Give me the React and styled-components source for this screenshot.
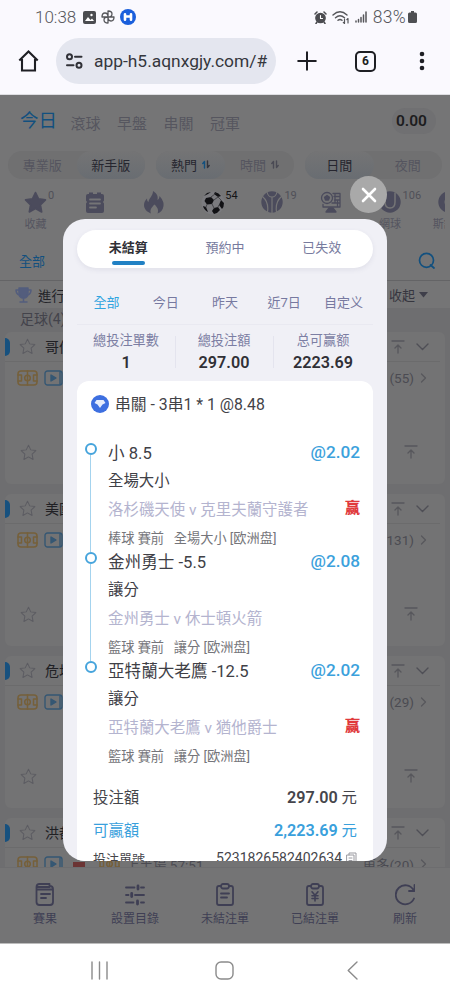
import React from "react";
import styled, { createGlobalStyle } from "styled-components";

const GlobalStyle = createGlobalStyle`
  *, *::before, *::after { box-sizing: border-box; }
  body {
    margin: 0;
    font-family: Roboto, "Noto Sans CJK TC", sans-serif;
    background: #fff;
  }
  svg { display: block; flex: none; }
`;

const Phone = styled.div`
  width: 450px;
  height: 1000px;
  overflow: hidden;
  display: flex;
  flex-direction: column;
  background: #fff;
`;

/* ---------- status + browser bar ---------- */

const StatusBar = styled.div`
  height: 34px;
  padding: 0 33px 0 35px;
  display: flex;
  align-items: center;
  background: #faf9fe;
  color: #55565a;
  font-size: 17px;
  font-weight: 300;
  line-height: 34px;
`;

const Battery = styled.span`
  font-size: 17.5px;
  letter-spacing: 0.3px;
`;

const StatusIcons = styled.div`
  display: flex;
  align-items: center;
  gap: ${(p) => p.$gap || 4}px;
  margin-left: ${(p) => p.$left || "0"};
  margin-right: ${(p) => p.$right || 0}px;
`;

const BrowserBar = styled.div`
  height: 61px;
  padding-left: 18px;
  display: flex;
  align-items: center;
  padding-bottom: 6px;
  background: #faf9fe;
  border-bottom: 1px solid #dedee2;
`;

const UrlBox = styled.div`
  width: 220px;
  height: 46px;
  margin: 0 21px 0 17px;
  padding-left: 9px;
  border-radius: 23px;
  background: #e4e6ef;
  display: flex;
  align-items: center;
  gap: 10px;
  font-size: 17.4px;
  color: #35373d;
  white-space: nowrap;
`;

const TabCount = styled.div`
  width: 21px;
  height: 21px;
  margin: 0 43px 0 38px;
  border: 2px solid #1e1f24;
  border-radius: 5px;
  font-size: 12px;
  font-weight: 700;
  line-height: 17px;
  text-align: center;
  color: #1e1f24;
`;

/* ---------- page behind the dialog ---------- */

const Page = styled.div`
  position: relative;
  height: 848px;
  flex: none;
  overflow: hidden;
  display: flex;
  flex-direction: column;
  background: #757576;
  color: #4b4b5d;
`;

const MainTabs = styled.div`
  height: 54px;
  padding: 0 14px 4px 20px;
  display: flex;
  align-items: center;
  gap: 16.5px;
`;

const MainTab = styled.span`
  font-size: ${(p) => (p.$active ? 18.5 : 15)}px;
  color: ${(p) => (p.$active ? "#12507f" : "#56565f")};
  padding-top: ${(p) => (p.$active ? 0 : 5)}px;
  margin-top: ${(p) => (p.$active ? -3 : -1)}px;
  margin-right: ${(p) => (p.$active ? -3 : 0)}px;
`;

const Balance = styled.div`
  margin-left: auto;
  margin-top: 1px;
  width: 44px;
  height: 26px;
  border-radius: 13px;
  background: #707072;
  line-height: 26px;
  padding-left: 4px;
  font-size: 15.5px;
  font-weight: 600;
  color: #1d1d20;
`;

const SwitchRow = styled.div`
  display: flex;
  height: 30px;
  padding: 2px 8px 0;
  justify-content: space-between;
`;

const Switch = styled.div`
  display: flex;
  width: ${(p) => p.$width}px;
  height: 28px;
  border-radius: 14px;
  background: #707071;
`;

const SwitchItem = styled.div`
  flex: 1;
  display: flex;
  align-items: center;
  justify-content: center;
  gap: 5px;
  padding-bottom: 1px;
  border-radius: 14px;
  font-size: 13px;
  color: ${(p) => (p.$active ? "#26262f" : "#55555f")};
  background: ${(p) =>
    p.$active ? "linear-gradient(#747475, #696d72)" : "transparent"};
`;

const Sports = styled.div`
  width: 445px;
  height: 62px;
  padding: 12px 0 0 6px;
  display: flex;
  overflow: hidden;
`;

const Sport = styled.div`
  position: relative;
  flex: 0 0 59.1px;
  display: flex;
  flex-direction: column;
  align-items: center;
  font-size: 11px;
  line-height: 14px;
  white-space: nowrap;
  color: #54545f;
`;

const SportLabel = styled.span`
  margin-top: auto;
  margin-bottom: 9px;
`;

const Count = styled.sup`
  position: absolute;
  left: 42px;
  top: -2px;
  font-size: 11px;
  line-height: 14px;
  color: ${(p) => (p.$dark ? "#141416" : "#505058")};
`;

const LeagueBar = styled.div`
  height: 40px;
  padding: 0 15px 0 19px;
  display: flex;
  align-items: center;
  justify-content: space-between;
  font-size: 13px;
  color: #12507f;
  border-bottom: 1px solid #646466;
`;

const LiveBar = styled.div`
  height: 27px;
  padding: 0 22px 0 15px;
  display: flex;
  align-items: center;
  font-size: 13.5px;
  color: #242429;
  background: #757576;
`;

const LiveName = styled.span`
  margin-left: 6px;
`;

const Collapse = styled.span`
  margin-left: auto;
  display: flex;
  align-items: center;
  gap: 4px;
  font-size: 13px;
  color: #36363f;
`;

const SportTitle = styled.div`
  height: 24px;
  padding-left: 20px;
  font-size: 14px;
  line-height: 22px;
  color: #43434b;
  background: #6e6e70;
`;

const Matches = styled.div`
  height: 535px;
  flex: none;
  overflow: hidden;
  padding: 0 5px;
  display: flex;
  flex-direction: column;
  gap: 10px;
  background: #6e6e70;
`;

const Match = styled.div`
  height: 152px;
  flex: none;
  border-radius: 6px;
  background: #737374;
`;

const MatchHead = styled.div`
  height: 30px;
  margin-right: 5px;
  padding-right: 11px;
  display: flex;
  align-items: center;
  border-bottom: 1px solid #6b6b6c;
  font-size: 14px;
  color: #202024;
`;

const Marker = styled.div`
  width: 5px;
  height: 18px;
  margin-right: 9px;
  border-radius: 0 5px 5px 0;
  background: #17517f;
`;

const HeadName = styled.span`
  margin: -2px 0 0 9px;
`;

const Spacer = styled.div`
  flex: 1;
`;

const MatchRow = styled.div`
  height: 32px;
  padding: 0 18px 0 12px;
  display: flex;
  align-items: center;
  gap: 6px;
  font-size: 13.5px;
  color: #4b4b52;
`;

const Flag = styled.div`
  width: 12px;
  height: 8px;
  margin: 4px 8px 0 4px;
  background: #6b3434;
`;

const MatchFoot = styled.div`
  height: 86px;
  padding: 30px 27px 0 15px;
  display: flex;
  align-items: center;
  justify-content: space-between;
`;

const BottomTabs = styled.div`
  height: 76px;
  flex: none;
  display: flex;
  background: #747475;
  border-top: 1px solid #6d6d6f;
`;

const BottomTab = styled.div`
  flex: 1;
  padding-top: 15px;
  display: flex;
  flex-direction: column;
  align-items: center;
  gap: 3px;
  font-size: 12px;
  line-height: 18px;
  color: #3f3f54;
`;

/* ---------- dialog ---------- */

const Dialog = styled.div`
  position: absolute;
  left: 63px;
  top: 124px;
  width: 324px;
  height: 642px;
  padding: 11px 14px 0;
  overflow: hidden;
  border-radius: 22px;
  background: #f0f0f6;
`;

const CloseButton = styled.div`
  position: absolute;
  left: 350px;
  top: 81px;
  width: 37px;
  height: 37px;
  border-radius: 50%;
  background: #a9a9a9;
  display: flex;
  align-items: center;
  justify-content: center;
`;

const StatusTabs = styled.div`
  height: 38px;
  padding: 0 3px;
  display: grid;
  grid-template-columns: repeat(3, 1fr);
  border-radius: 19px;
  background: #fff;
  box-shadow: 0 2px 5px rgba(90, 90, 130, 0.1);
`;

const StatusTab = styled.div`
  display: flex;
  flex-direction: column;
  align-items: center;
  font-size: 13px;
  line-height: 35px;
  font-weight: ${(p) => (p.$active ? 700 : 400)};
  color: ${(p) => (p.$active ? "#303036" : "#777b9e")};
  &::after {
    content: "";
    width: 33px;
    height: 4px;
    margin-top: -4px;
    border-radius: 2px;
    background: ${(p) => (p.$active ? "#2181c4" : "transparent")};
  }
`;

const Filters = styled.div`
  height: 57px;
  padding-top: 25px;
  display: grid;
  grid-template-columns: repeat(5, 1fr);
  border-bottom: 1px solid #e9e9f1;
  margin-bottom: 3.5px;
`;

const Filter = styled.span`
  text-align: center;
  font-size: 13px;
  line-height: 20px;
  color: ${(p) => (p.$active ? "#31a5e0" : "#7779a0")};
`;

const Stats = styled.div`
  height: 52.5px;
  display: grid;
  grid-template-columns: 98px 98px 100px;
`;

const Stat = styled.div`
  position: relative;
  text-align: center;
  font-size: 13.2px;
  line-height: 23px;
  color: #7c7ea3;
  & + &::before {
    content: "";
    position: absolute;
    left: 0;
    top: 7px;
    height: 32px;
    border-left: 1px solid #e4e4ee;
  }
`;

const StatValue = styled.div`
  font-size: 16.2px;
  font-weight: 600;
  line-height: 22px;
  color: #303036;
`;

const Ticket = styled.div`
  height: 520px;
  padding: 10px 13px 0 14px;
  border-radius: 12px 12px 0 0;
  background: #fff;
`;

const TicketTitle = styled.div`
  height: 26px;
  display: flex;
  align-items: center;
  gap: 6px;
  font-size: 15.8px;
  color: #424247;
  white-space: pre;
`;

const TitleText = styled.span`
  margin-top: -1px;
`;

const Legs = styled.div`
  padding-top: 21px;
`;

const Leg = styled.div`
  position: relative;
  height: 109px;
  padding-left: 17px;
  &::before {
    content: "";
    position: absolute;
    left: -6px;
    top: 5px;
    width: 12px;
    height: 12px;
    border: 2px solid #46a4dc;
    border-radius: 50%;
    background: #fff;
  }
  &:not(:last-child)::after {
    content: "";
    position: absolute;
    left: -1px;
    top: 17px;
    height: 97px;
    border-left: 1.5px solid #a4d3ee;
  }
`;

const LegLine = styled.div`
  display: flex;
  justify-content: space-between;
  align-items: center;
  height: ${(p) => p.$height || 28}px;
  white-space: pre;
  font-size: ${(p) => p.$size || 15.4}px;
  color: ${(p) => p.$color || "#404046"};
`;

const Odds = styled.span`
  font-size: 17.2px;
  font-weight: 500;
  color: #3ba1dc;
`;

const Won = styled.span`
  font-size: 15px;
  font-weight: 900;
  color: #e0393c;
  margin-top: -4px;
`;

const Totals = styled.div`
  margin-top: 14px;
  padding: 0 3px 0 2px;
`;

const TotalRow = styled.div`
  height: ${(p) => (p.$small ? 26 : 33)}px;
  display: flex;
  align-items: center;
  justify-content: space-between;
  font-size: ${(p) => (p.$small ? 13 : 15.4)}px;
  color: ${(p) => (p.$blue ? "#39a0dc" : "#45454b")};
  b { font-size: 16.2px; font-weight: 600; }
`;

const OrderNo = styled.span`
  display: flex;
  align-items: center;
  gap: 4px;
  font-size: 14px;
`;

const SystemNav = styled.div`
  height: 57px;
  padding: 0 92px 4px 91px;
  display: grid;
  grid-template-columns: 1fr 19px 1fr;
  align-items: center;
  background: #fff;
  border-top: 1px solid #bcbcbc;
  svg:last-child { justify-self: end; }
`;

/* ---------- icons ---------- */

const Svg = ({ w = 22, h, box, color = "currentColor", sw = 1.6, children }) => (
  <svg
    width={w}
    height={h || w}
    viewBox={box || `0 0 ${w} ${h || w}`}
    fill="none"
    stroke={color}
    strokeWidth={sw}
    strokeLinecap="round"
    strokeLinejoin="round"
  >
    {children}
  </svg>
);

const STAR = "M11 1.5 13.9 7.6 20.5 8.5 15.7 13.2 16.9 20 11 16.7 5.1 20 6.3 13.2 1.5 8.5 8.1 7.6Z";

const StarOutline = () => (
  <Svg w={17} box="0 0 22 22" color="#5c5c62" sw={1.3}><path d={STAR} /></Svg>
);

const ToTop = () => (
  <Svg w={14} h={16} color="#57575c" sw={1.3}><path d="M1 2h12M7 14V6M4 9l3-3 3 3" /></Svg>
);

const Lineup = () => (
  <Svg w={21} h={16} color="#76603a" sw={1.5}>
    <rect x="1" y="1" width="19" height="14" rx="3" />
    <path d="M10.500 1v14M1 5h3.500v6H1M20 5h-3.500v6H20" />
    <circle cx="10.500" cy="8" r="2.800" />
  </Svg>
);

const Video = () => (
  <Svg w={19} h={16} color="#355773" sw={1.4}>
    <rect x="1" y="1" width="17" height="14" rx="2.500" />
    <path d="M7 5v6l5-3z" fill="#355773" />
    <path d="M16 2v12" />
  </Svg>
);

const GREY = "#4b4b5c";

const sportIcons = {
  star: <Svg w={23} box="0 0 22 22" color={GREY}><path d={STAR} fill={GREY} /></Svg>,
  note: (
    <Svg w={22} color="none">
      <path d="M4 3h1V1.500h4V3h4V1.500h4V3h1q2 0 2 2v4.500l-1 1.500 1 1.500V20q0 2-2 2H4q-2 0-2-2v-7.500L3 11 2 9.500V5q0-2 2-2z" fill={GREY} />
      <path d="M6 8.500h10M6 12.500h10M6 16.500h6" stroke="#757576" strokeWidth="1.800" />
    </Svg>
  ),
  fire: (
    <Svg w={22} h={23} color="none">
      <path fill={GREY} d="M10 0c5 3 5 6 4.500 9 1.500-1 2-2.500 2-4C20 9 21 12 20.500 15c-.5 4-3 6.500-6 7.500 1.500-3.500 0-6-3-9-3 3-5 5.500-3.500 9C4 21 1 18 1 14c0-3 1.500-5 3-6.500 0 2 .5 3 1.500 3.500C6 7 10 5 10 0z" />
    </Svg>
  ),
  soccer: (
    <Svg w={24} color="none">
      <circle cx="12" cy="12" r="11.500" fill="#7b7b7f" />
      <path fill="#111114" d="m5 7 5-1 3 3-2 4-5 .5L3.500 10zM14 1q4 1 6 4l-3 1-4-3zM20 9l3 3q0 4-2 6l-3-4zM13 17l4-1 2 3q-2 3-6 4l-2-3zM2 15l3 1 2 5Q3 19 2 15zM6 2l4-1-3 2-4 2z" />
      <path stroke="#444448" strokeWidth="1" d="m10 6 4-3M13 9l4-3M11 13l2 4M6 13.500 5 16M17 6l3 3M17 16l1-2" />
    </Svg>
  ),
  basketball: (
    <Svg w={22} color="none">
      <circle cx="11" cy="11" r="10.700" fill={GREY} />
      <path stroke="#757576" strokeWidth="1.200" d="M11 6v16M1.500 5.500Q8 11 6.500 21M20.500 5.500Q14 11 15.500 21M6 1q1 5 5 5t5-5" />
    </Svg>
  ),
  esports: (
    <Svg w={22} color={GREY} sw={1.3}>
      <circle cx="7" cy="7" r="5.500" />
      <path d="M7 4.500 9.500 6.200 8.500 9H5.500L4.500 6.200z" fill={GREY} />
      <path d="M13 2.500h7V16H3v-2.500M14 5.500h5M14.500 9h5M12 12h7M15 3v9M17.500 9v6" />
      <path d="M9 17h4l3 4H6z" fill={GREY} />
    </Svg>
  ),
  tennis: (
    <Svg w={22} color="none">
      <circle cx="11" cy="11" r="10.700" fill={GREY} />
      <path stroke="#757576" strokeWidth="1.500" d="M6 2v9q0 6 5 6t5-6V2" />
    </Svg>
  ),
  snooker: (
    <Svg w={22} color="none">
      <circle cx="11" cy="11" r="10.700" fill={GREY} />
      <circle cx="12" cy="11" r="5.500" fill="#757576" />
    </Svg>
  ),
};

const sports = [
  { icon: "star", count: "0", label: "收藏" },
  { icon: "note" },
  { icon: "fire" },
  { icon: "soccer", count: "54", dark: true },
  { icon: "basketball", count: "19" },
  { icon: "esports" },
  { icon: "tennis", count: "106", label: "網球" },
  { icon: "snooker", label: "斯諾克" },
];

const matches = [
  { name: "哥倫", more: "(55)" },
  { name: "美國", more: "(131)" },
  { name: "危地", more: "(29)" },
  { name: "洪都", more: "更多(20)", clock: "上半場 57:51" },
];

const clipboard = (
  <>
    <path d="M6 3H4Q2 3 2 5v15q0 2 2 2h12q2 0 2-2V5q0-2-2-2h-2" />
    <rect x="6" y="1" width="8" height="4.500" rx="2" />
  </>
);

const bottomTabs = [
  {
    label: "賽果",
    icon: <><path d="M1.500 6V4q0-3 3-3h10v2q3.500 0 3.500 3v13q0 3-3 3H4.500q-3 0-3-3zM1.500 6.500H18M2.500 4h12" /><path d="M6 11h9M6 15h5" /></>,
  },
  {
    label: "設置目錄",
    icon: <><path d="M1 4.500h8.500M16 4.500h3M1 12h2.500M10 12h9M1 19.500h7.500M16 19.500h3" /><path strokeWidth="2.800" d="M13 3v3M6.700 10.500v3M12.500 18v3" /></>,
  },
  { label: "未結注單", icon: <>{clipboard}<path d="M6 10.500h8M6 14.500h6" /></> },
  { label: "已結注單", icon: <>{clipboard}<path strokeWidth="1.600" d="m7 8.800 3 3.500 3-3.500M10 12.300V18M7 12.800h6M7 15.500h6" /></> },
  {
    label: "刷新",
    icon: <path d="M18.500 7A9.500 9.500 0 1 0 19 15.500M19.500 2v6H14" />,
  },
];

const legs = [
  { pick: "小 8.5", odds: "@2.02", market: "全場大小", teams: "洛杉磯天使 v 克里夫蘭守護者", info: "棒球 賽前   全場大小 [欧洲盘]", won: true },
  { pick: "金州勇士 -5.5", odds: "@2.08", market: "讓分", teams: "金州勇士 v 休士頓火箭", info: "籃球 賽前   讓分 [欧洲盘]" },
  { pick: "亞特蘭大老鷹 -12.5", odds: "@2.02", market: "讓分", teams: "亞特蘭大老鷹 v 猶他爵士", info: "籃球 賽前   讓分 [欧洲盘]", won: true },
];

const SortArrows = ({ color, second }) => (
  <Svg w={8} h={9} color={color} sw={1.4}>
    <path d="M2.500 8V1.500L.8 3.500" />
    <path d="M5.500 1v6.500l1.700-2" stroke={second || color} />
  </Svg>
);

const Header = () => (
  <>
    <StatusBar>
      10:38
      <StatusIcons $left="7px" $gap={5}>
        <Svg w={13} color="none">
          <rect width="13" height="13" rx="2" fill="#4b4c50" />
          <path d="m2 10 3-4 2.500 3L9 7.500l2 2.500z" fill="#fff" />
          <circle cx="8.500" cy="4" r="1.200" fill="#fff" />
        </Svg>
        <Svg w={14} color="#55565a" sw={1.3}>
          <path d="M7 7V1q4 0 4 3t-4 3h6q0 4-3 4T7 7v6q-4 0-4-3t4-3H1q0-4 3-4t3 4" />
        </Svg>
        <Svg w={16} color="none">
          <circle cx="8" cy="8" r="8" fill="#1a5fdc" />
          <path d="M5 5.200v5.600M11 5.200v5.600M5 7.500h6" stroke="#fff" strokeWidth="2.600" />
        </Svg>
      </StatusIcons>
      <StatusIcons $left="auto" $right={6} $gap={5}>
        <Svg w={13} color="#4b4c50" sw={1.5}>
          <circle cx="6.500" cy="7" r="4.600" fill="#4b4c50" />
          <path d="M1 3l2-2M12 3l-2-2M3 11l-1 1.500M10 11l1 1.500" />
          <path d="M6.500 4.500V7.500h2" stroke="#fff" strokeWidth="1.100" />
        </Svg>
        <Svg w={18} h={15} color="#55565a" sw={1.4}>
          <path d="M1 5q7-6.500 14 0M3.500 7.800q4.500-4 9 0M6 10.300q2-1.800 4 0" />
          <path d="M12.500 9v4.500l-1.200-1.200M16 13V8.500l-1.200 1.200" strokeWidth="1.200" />
        </Svg>
        <Svg w={12} color="#55565a" sw={1.5}>
          <path d="M1 11v-1M3.500 11V8.500M6 11V6.500M8.500 11V4M11 11V1" />
        </Svg>
      </StatusIcons>
      <Battery>83%</Battery>
      <StatusIcons $left="2px">
        <Svg w={9} h={12} color="none">
          <path d="M3 0h3v1.500h1.500Q9 1.500 9 3v7.500Q9 12 7.500 12h-6Q0 12 0 10.500V3q0-1.500 1.500-1.500H3z" fill="#4e4f53" />
        </Svg>
      </StatusIcons>
    </StatusBar>
    <BrowserBar>
      <Svg w={21} h={22} color="#1e1f24" sw={2.1}>
        <path d="M1.300 10.500 10.500 1.500l9.200 9M4 9v11.500h13V9" strokeLinecap="butt" strokeLinejoin="miter" />
      </Svg>
      <UrlBox>
        <Svg w={19} h={16} color="#303137" sw={2}>
          <circle cx="4.500" cy="3.800" r="2.500" />
          <path d="M10 3.800h6.500M2 12.200h6.500" />
          <circle cx="14" cy="12.200" r="2.500" />
        </Svg>
        app-h5.aqnxgjy.com/#
      </UrlBox>
      <Svg w={20} color="#1e1f24" sw={2}><path d="M10 1.200v17.600M1.200 10h17.600" /></Svg>
      <TabCount>6</TabCount>
      <Svg w={6} h={20} color="none">
        <g fill="#1e1f24"><circle cx="3" cy="3" r="2.300" /><circle cx="3" cy="10" r="2.300" /><circle cx="3" cy="17" r="2.300" /></g>
      </Svg>
    </BrowserBar>
  </>
);

const MatchCard = ({ name, more, clock }) => (
  <Match>
    <MatchHead>
      <Marker />
      <StarOutline />
      <HeadName>{name}</HeadName>
      <Spacer />
      <ToTop />
      <Svg w={24} h={10} color="#4f4f56" sw={1.4}><path d="M12 2l5.500 5.500L23 2" /></Svg>
    </MatchHead>
    <MatchRow>
      <Lineup />
      <Video />
      {clock && (
        <>
          <Flag />
          <Lineup />
          {clock}
        </>
      )}
      <Spacer />
      {more}
      <Svg w={7} h={10} color="#57575c" sw={1.2}><path d="M1.500 1l4 4-4 4" /></Svg>
    </MatchRow>
    <MatchFoot>
      <StarOutline />
      <ToTop />
    </MatchFoot>
  </Match>
);

const BetDialog = () => (
  <Dialog>
    <StatusTabs>
      <StatusTab $active>未結算</StatusTab>
      <StatusTab>預約中</StatusTab>
      <StatusTab>已失效</StatusTab>
    </StatusTabs>
    <Filters>
      <Filter $active>全部</Filter>
      <Filter>今日</Filter>
      <Filter>昨天</Filter>
      <Filter>近7日</Filter>
      <Filter>自定义</Filter>
    </Filters>
    <Stats>
      <Stat>總投注單數<StatValue>1</StatValue></Stat>
      <Stat>總投注額<StatValue>297.00</StatValue></Stat>
      <Stat>总可赢额<StatValue>2223.69</StatValue></Stat>
    </Stats>
    <Ticket>
      <TicketTitle>
        <Svg w={18} color="none">
          <circle cx="9" cy="9" r="9" fill="#3d6fe0" />
          <path d="M5.500 5h7l2 3-3 1.500L9 13 6.500 9.500l-3-1.500z" fill="#e6edfc" />
        </Svg>
        <TitleText>串關 - 3串1 * 1 @8.48</TitleText>
      </TicketTitle>
      <Legs>
        {legs.map((leg) => (
          <Leg key={leg.pick}>
            <LegLine $size={16.6} $height={27}>{leg.pick}<Odds>{leg.odds}</Odds></LegLine>
            <LegLine $height={28}>{leg.market}</LegLine>
            <LegLine $height={30} $color="#b4b4cf" $size={15.45}>
              {leg.teams}
              {leg.won && <Won>赢</Won>}
            </LegLine>
            <LegLine $height={28} $size={13.2} $color="#75757a">{leg.info}</LegLine>
          </Leg>
        ))}
      </Legs>
      <Totals>
        <TotalRow>投注額<span><b>297.00</b> 元</span></TotalRow>
        <TotalRow $blue>可贏額<span><b>2,223.69</b> 元</span></TotalRow>
        <TotalRow $small>
          投注單號
          <OrderNo>
            5231826582402634
            <Svg w={11} h={13} color="#9a9aa0" sw={1}>
              <path d="M3 3V1h7v9H8M1 3h7v9H1zM3 6h3M3 8.500h3" />
            </Svg>
          </OrderNo>
        </TotalRow>
      </Totals>
    </Ticket>
  </Dialog>
);

const App = () => {
  return (
    <Phone>
      <GlobalStyle />
      <Header />
      <Page>
        <MainTabs>
          <MainTab $active>今日</MainTab>
          <MainTab>滾球</MainTab>
          <MainTab>早盤</MainTab>
          <MainTab>串關</MainTab>
          <MainTab>冠軍</MainTab>
          <Balance>0.00</Balance>
        </MainTabs>
        <SwitchRow>
          <Switch $width={137}>
            <SwitchItem>專業版</SwitchItem>
            <SwitchItem $active>新手版</SwitchItem>
          </Switch>
          <Switch $width={138}>
            <SwitchItem $active>熱門<SortArrows color="#12507f" second="#33333c" /></SwitchItem>
            <SwitchItem>時間<SortArrows color="#4a4a54" /></SwitchItem>
          </Switch>
          <Switch $width={137}>
            <SwitchItem $active>日間</SwitchItem>
            <SwitchItem>夜間</SwitchItem>
          </Switch>
        </SwitchRow>
        <Sports>
          {sports.map((s) => (
            <Sport key={s.icon}>
              {sportIcons[s.icon]}
              {s.count && <Count $dark={s.dark}>{s.count}</Count>}
              {s.label && <SportLabel>{s.label}</SportLabel>}
            </Sport>
          ))}
        </Sports>
        <LeagueBar>
          全部
          <Svg w={17} color="#12507f" sw={1.7}>
            <circle cx="8.500" cy="8.300" r="7" />
            <path d="M12.500 13l3.500 3" />
          </Svg>
        </LeagueBar>
        <LiveBar>
          <Svg w={17} h={16} color="#535d7d" sw={1.5}>
            <path d="M4 1h9v5q0 5-4.500 5T4 6z" fill="#535d7d" />
            <path d="M4 3H1q0 4 3.500 5M13 3h3q0 4-3.500 5M8.500 11v3M5 15h7" />
          </Svg>
          <LiveName>進行</LiveName>
          <Collapse>
            收起
            <Svg w={9} h={7} color="none"><path d="M0 1h9L4.500 6.500z" fill="#3f3f4a" /></Svg>
          </Collapse>
        </LiveBar>
        <SportTitle>足球(4)</SportTitle>
        <Matches>
          {matches.map((m) => <MatchCard key={m.name} {...m} />)}
        </Matches>
        <BottomTabs>
          {bottomTabs.map((t) => (
            <BottomTab key={t.label}>
              <Svg w={20} h={24} sw={1.8}>{t.icon}</Svg>
              {t.label}
            </BottomTab>
          ))}
        </BottomTabs>
        <CloseButton>
          <Svg w={16} color="#fff" sw={2.6}><path d="M2 2l12 12M14 2L2 14" /></Svg>
        </CloseButton>
        <BetDialog />
      </Page>
      <SystemNav>
        <Svg w={17} h={19} color="#8b8b8b" sw={1.4}><path d="M1 1v17M8.500 1v17M16 1v17" /></Svg>
        <Svg w={19} color="#8b8b8b" sw={1.4}><rect x="1" y="1" width="17" height="17" rx="5" /></Svg>
        <Svg w={11} h={19} color="#8b8b8b" sw={1.4}><path d="M10 1 1.200 9.500 10 18" /></Svg>
      </SystemNav>
    </Phone>
  );
};

export default App;
